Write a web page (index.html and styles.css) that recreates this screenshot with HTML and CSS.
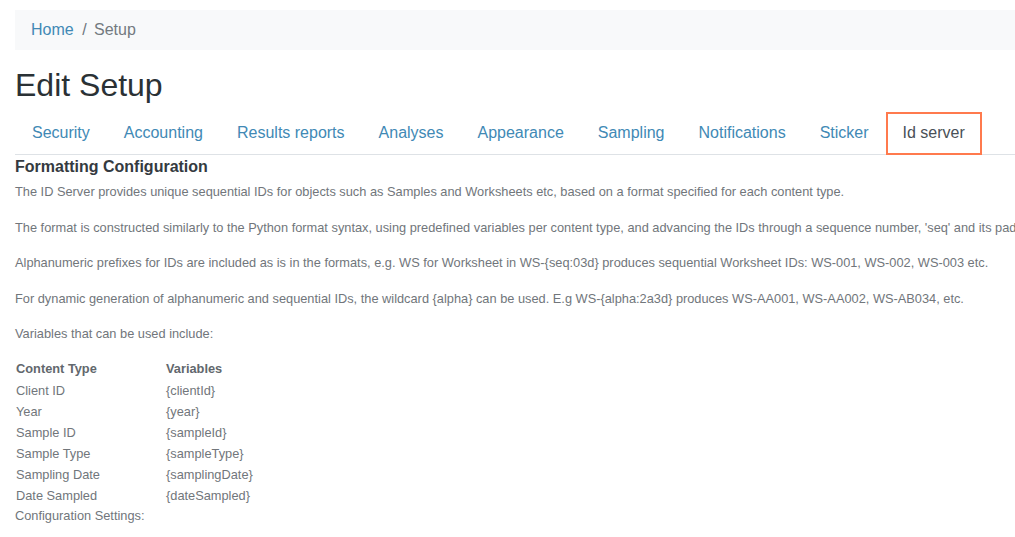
FILE: index.html
```html
<!DOCTYPE html>
<html lang="en">
<head>
    <meta charset="UTF-8">
    <meta name="viewport" content="width=device-width, initial-scale=1.0">
    <title>Edit Setup</title>
    <link rel="stylesheet" href="styles.css">
</head>
<body>
    <div id="page">
        <nav class="breadcrumb">
            <a href="#">Home</a>
            <span class="sep">/</span>
            <span class="current">Setup</span>
        </nav>

        <h1>Edit Setup</h1>

        <ul class="tabs">
            <li><a href="#">Security</a></li>
            <li><a href="#">Accounting</a></li>
            <li><a href="#">Results reports</a></li>
            <li><a href="#">Analyses</a></li>
            <li><a href="#">Appearance</a></li>
            <li><a href="#">Sampling</a></li>
            <li><a href="#">Notifications</a></li>
            <li><a href="#">Sticker</a></li>
            <li><a href="#" class="active">Id server</a></li>
        </ul>

        <div class="tab-content">
            <h4>Formatting Configuration</h4>
            <p>The ID Server provides unique sequential IDs for objects such as Samples and Worksheets etc, based on a format specified for each content type.</p>
            <p>The format is constructed similarly to the Python format syntax, using predefined variables per content type, and advancing the IDs through a sequence number, 'seq' and its padding as a number of digits, e.g. '03d' for a sequence of IDs from 001 to 999.</p>
            <p>Alphanumeric prefixes for IDs are included as is in the formats, e.g. WS for Worksheet in WS-{seq:03d} produces sequential Worksheet IDs: WS-001, WS-002, WS-003 etc.</p>
            <p>For dynamic generation of alphanumeric and sequential IDs, the wildcard {alpha} can be used. E.g WS-{alpha:2a3d} produces WS-AA001, WS-AA002, WS-AB034, etc.</p>
            <p>Variables that can be used include:</p>

            <table class="vars">
                <tr><th>Content Type</th><th>Variables</th></tr>
                <tr><td>Client ID</td><td>{clientId}</td></tr>
                <tr><td>Year</td><td>{year}</td></tr>
                <tr><td>Sample ID</td><td>{sampleId}</td></tr>
                <tr><td>Sample Type</td><td>{sampleType}</td></tr>
                <tr><td>Sampling Date</td><td>{samplingDate}</td></tr>
                <tr><td>Date Sampled</td><td>{dateSampled}</td></tr>
            </table>
            <div class="settings">Configuration Settings:</div>
        </div>
    </div>
</body>
</html>
```

FILE: styles.css
```css
html, body {
    overflow: hidden;
}
body {
    font-family: "Liberation Sans", Arial, sans-serif;
    margin: 0;
    color: #212529;
    background: #fff;
}
a {
    color: #4189b5;
    text-decoration: none;
}
#page {
    width: 1200px;
    padding: 10px 0 0 15px;
}
.breadcrumb {
    background: #f8f9fa;
    padding: 8px 16px;
    font-size: 16px;
    line-height: 24px;
}
.breadcrumb .sep {
    color: #6c757d;
    padding: 0 3px 0 4px;
}
.breadcrumb .current {
    color: #737a80;
}
h1 {
    font-size: 32px;
    font-weight: 400;
    line-height: 38px;
    margin: 16px 0 8px;
    color: #2a3135;
}
.tabs {
    display: flex;
    list-style: none;
    margin: 0;
    padding: 0;
    border-bottom: 1px solid #dee2e6;
}
.tabs li {
    margin-bottom: -1px;
}
.tabs a {
    display: block;
    padding: 8px 16px;
    border: 1px solid transparent;
    font-size: 16px;
    line-height: 24px;
}
.tabs a.active {
    color: #495057;
    background: #fff;
    border: 2px solid #ff7a4d;
    padding: 7px 15px 8px;
}
.tab-content {
    font-size: 12.8px;
    color: #71767b;
}
.tab-content h4 {
    font-size: 16px;
    line-height: 24px;
    font-weight: 700;
    color: #343a40;
    margin: 0 0 3px;
}
.tab-content p {
    margin: 0 0 16px;
    line-height: 19.5px;
    white-space: nowrap;
}
.vars {
    border-collapse: collapse;
    margin-top: -2px;
}
.vars th, .vars td {
    text-align: left;
    padding: 0 1px;
    height: 21px;
    vertical-align: middle;
}
.vars th {
    font-weight: 700;
    color: #62686d;
    height: 22px;
}
.vars td:first-child, .vars th:first-child {
    width: 148px;
}
.settings {
    line-height: 20px;
}
```
